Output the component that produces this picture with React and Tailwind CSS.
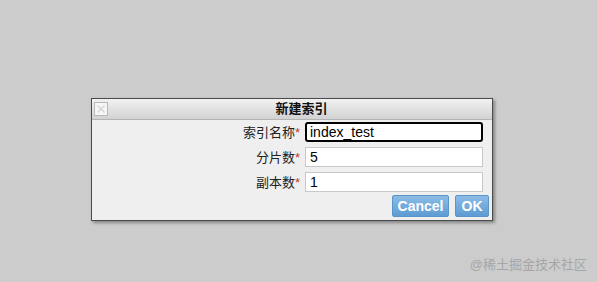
import { useState } from "react";

const fields = [
  { label: "索引名称", value: "index_test", focused: true },
  { label: "分片数", value: "5" },
  { label: "副本数", value: "1" },
];

function Field({ label, value, focused }) {
  const [val, setVal] = useState(value);
  return (
    <div className="flex items-center h-[20px]">
      <label className="w-[213px] text-right text-[13px] text-[#222] leading-none pr-[5px]">
        {label}
        <span className="text-[#c0392b]">*</span>
      </label>
      {/* focused field gets the heavy black ring */}
      <input
        value={val}
        onChange={(e) => setVal(e.target.value)}
        className={
          focused
            ? "w-[178px] h-[20px] bg-white border-2 border-black rounded-[3px] px-[3px] text-[14px] text-black outline-none"
            : "w-[178px] h-[20px] bg-white border border-[#c8c8c8] px-[4px] text-[14px] text-black outline-none"
        }
      />
    </div>
  );
}

export default function App() {
  return (
    <div
      className="w-[597px] h-[282px] bg-[#cccccc] relative overflow-hidden pt-[98px] pl-[91px]"
      style={{ fontFamily: '"Liberation Sans", Arial, "Noto Sans CJK SC", sans-serif' }}
    >
      {/* Dialog */}
      <div className="w-[402px] h-[123px] bg-[#efefef] border border-[#4a4a4a] shadow-[2px_2px_3px_rgba(0,0,0,0.35)] flex flex-col">
        {/* Title bar */}
        <div className="h-[21px] flex items-center border-b border-[#b4b4b4] bg-gradient-to-b from-[#f2f2f2] to-[#d2d2d2] px-[1px]">
          <div className="w-[14px] h-[14px] ml-[1px] border border-[#b8b8b8] bg-[#f6f6f6] flex items-center justify-center">
            <svg width="10" height="10" viewBox="0 0 10 10">
              <path d="M1.5 1.5 L8.5 8.5 M8.5 1.5 L1.5 8.5" stroke="#d4d4d4" strokeWidth="1.2" />
            </svg>
          </div>
          <div className="flex-1 text-center text-[13px] font-bold text-[#111] pl-[4px]">新建索引</div>
        </div>

        {/* Form */}
        <div className="flex flex-col gap-[5px] pt-[2px]">
          {fields.map((f) => (
            <Field key={f.label} {...f} />
          ))}
        </div>

        {/* Buttons */}
        <div className="flex justify-end gap-[6px] pr-[3px] mt-[3px]">
          <button className="h-[22px] w-[57px] rounded-[2px] border border-[#5b95c8] bg-gradient-to-b from-[#8cbce6] to-[#5d9bd3] text-white text-[14px] font-bold">
            Cancel
          </button>
          <button className="h-[22px] w-[34px] rounded-[2px] border border-[#5b95c8] bg-gradient-to-b from-[#8cbce6] to-[#5d9bd3] text-white text-[14px] font-bold">
            OK
          </button>
        </div>
      </div>

      {/* Watermark */}
      <div className="absolute right-[10px] bottom-[8px] text-[13px] text-[#a6a6a6]">@稀土掘金技术社区</div>
    </div>
  );
}
